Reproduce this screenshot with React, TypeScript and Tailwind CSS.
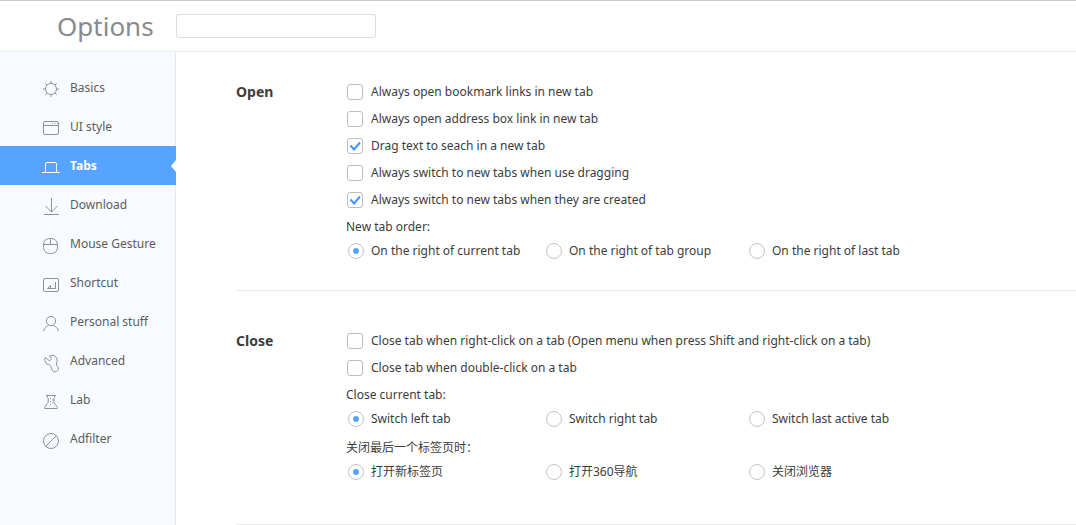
import { useState, type ReactNode } from "react";

const icons: Record<string, ReactNode> = {
  Basics: (
    <>
      <circle cx="9" cy="12" r="5.5" />
      <path d="M9 6.500V4M9 20v-2.500M3.500 12H1M17 12h-2.500M5.100 8.100L3.300 6.300M14.700 17.700l-1.800-1.800M5.100 15.900l-1.800 1.800M14.700 6.300l-1.800 1.800" />
    </>
  ),
  "UI style": (
    <>
      <rect x="1.500" y="5.500" width="15" height="13" rx="1.500" />
      <path d="M1.500 9.500h15M10 7.500h1M12.500 7.500h1M15 7.500h.8" />
    </>
  ),
  Tabs: <path d="M0 17.500h18M3.500 17.500V9q0-1.500 1.500-1.500h8q1.500 0 1.500 1.500v8.500" />,
  Download: <path d="M2 20.500h15M9.500 4v14M3.500 12l6 6 6-6" />,
  "Mouse Gesture": (
    <>
      <rect x="1.500" y="5.500" width="14" height="15" rx="6" />
      <path d="M1.500 11.500h14M8.500 5.500v6" />
    </>
  ),
  Shortcut: (
    <>
      <rect x="1.500" y="6.500" width="15" height="13" rx="1.500" />
      <path d="M13.500 10v6.500h-8l3-3v3" />
    </>
  ),
  "Personal stuff": (
    <>
      <circle cx="9" cy="10" r="4.600" />
      <path d="M1.500 20c.8-2.800 2.700-4.500 5-5.600M16.500 20c-.8-2.800-2.700-4.500-5-5.600" />
    </>
  ),
  Advanced: (
    <path d="M3.300 7.500c-1 2-.6 4 .7 5.600 1.200 1.400 3.300 1.300 4.300 2.400 1 1.200.9 3.300 1.900 4.700.9 1.500 2.600 2 4.200 1.300 1.800-.9 2.500-2.200 1.900-3.700-.5-1.400-1.900-2.300-2-3.800-.1-1.300.9-2.100.9-3.700 0-2.900-2.300-5.100-5.400-5-1 0-2 .1-2.300.5l1.900 2.700c-.2 1.200-.9 1.900-2.200 2.100z" />
  ),
  Lab: (
    <>
      <path d="M4 6.500h10M5.500 6.500v2l.7.700v4.100l-3.700 5.200q-.3 1 .5 1h12q.8 0 .5-1l-3.700-5.200V9.200l.7-.7v-2" />
      <path d="M8 9.500h1M8 12.500h1M10 11h1M8 15.500h1M10 14h1" />
    </>
  ),
  Adfilter: (
    <>
      <circle cx="9" cy="13" r="7.500" />
      <path d="M3.700 18.300L14.300 7.700" />
    </>
  ),
};

function Check({ label, checked = false }: { label: string; checked?: boolean }) {
  return (
    <label className="flex h-[27px] items-center gap-2 pl-px">
      <span className="grid size-4 shrink-0">
        <input
          type="checkbox"
          defaultChecked={checked}
          className="peer col-start-1 row-start-1 size-4 appearance-none rounded-[3px] border border-[#bdbdbd] bg-white"
        />
        <svg
          viewBox="0 0 16 16"
          className="pointer-events-none col-start-1 row-start-1 size-4 fill-none stroke-[#3d97ff] stroke-2 opacity-0 peer-checked:opacity-100"
        >
          <path d="M3.500 7.500l3.500 4 6-7" />
        </svg>
      </span>
      {label}
    </label>
  );
}

function RadioGroup({ title, name, options }: { title: string; name: string; options: string[] }) {
  return (
    <div role="radiogroup" aria-label={title}>
      <p className="h-[27px] leading-[27px]">{title}</p>
      <div className="grid grid-cols-[198px_203px_auto] justify-start pl-0.5">
        {options.map((option, i) => (
          <label key={option} className="flex h-[21px] items-center gap-[7px] whitespace-nowrap">
            <input
              type="radio"
              name={name}
              defaultChecked={i === 0}
              className="grid size-4 shrink-0 appearance-none place-content-center rounded-full border border-[#c4c4c4] bg-white before:size-1.5 before:rounded-full checked:before:bg-[#56a4ff]"
            />
            {option}
          </label>
        ))}
      </div>
    </div>
  );
}

function Section({ title, className, children }: { title: string; className: string; children: ReactNode }) {
  return (
    <section className={`flex border-b border-[#e9e9e9] ${className}`}>
      <h2 className="w-[110px] shrink-0 text-sm leading-[27px] font-bold">{title}</h2>
      <div className="min-w-0 flex-1">{children}</div>
    </section>
  );
}

export default function App() {
  const [active, setActive] = useState("Tabs");
  return (
    <div className="flex min-h-screen flex-col bg-white font-['Noto_Sans','Noto_Sans_CJK_SC',sans-serif] text-[12px] text-[#3c3c3c]">
      <header className="flex h-[52px] items-center border-y border-t-[#c8c8c8] border-b-[#e8ebf0]">
        <h1 className="w-44 pl-[57px] text-[26px] leading-8 text-[#8a8a8a]">Options</h1>
        <input
          type="search"
          aria-label="Search options"
          className="h-6 w-[200px] rounded-xs border border-[#dfdfdf] px-2 outline-none"
        />
      </header>
      <div className="flex flex-1">
        <nav className="w-44 shrink-0 border-r border-[#e6eaf0] bg-[#f8fbff] pt-4">
          {Object.keys(icons).map((name) => {
            const on = name === active;
            return (
              <a
                key={name}
                href="#"
                aria-current={on ? "page" : undefined}
                onClick={(e) => {
                  e.preventDefault();
                  setActive(name);
                }}
                className={`relative flex h-[39px] items-center gap-[9px] pl-[42px] whitespace-nowrap ${
                  on ? "-mr-px bg-[#56a4ff] font-bold text-white" : "text-[#5c5c5c]"
                }`}
              >
                <svg
                  viewBox="0 0 19 21"
                  className={`h-[21px] w-[19px] shrink-0 overflow-visible fill-none ${on ? "stroke-white" : "stroke-[#8f9194]"}`}
                >
                  {icons[name]}
                </svg>
                {name}
                {on && (
                  <svg viewBox="0 0 5 12" className="absolute top-3.5 right-0 h-3 w-[5px] fill-white">
                    <path d="M5 0v12L0 6z" />
                  </svg>
                )}
              </a>
            );
          })}
        </nav>
        <main className="min-w-0 flex-1 pl-[60px]">
          <Section title="Open" className="pt-[26px] pb-[29px]">
            <Check label="Always open bookmark links in new tab" />
            <Check label="Always open address box link in new tab" />
            <Check label="Drag text to seach in a new tab" checked />
            <Check label="Always switch to new tabs when use dragging" />
            <Check label="Always switch to new tabs when they are created" checked />
            <RadioGroup
              title="New tab order:"
              name="order"
              options={["On the right of current tab", "On the right of tab group", "On the right of last tab"]}
            />
          </Section>
          <Section title="Close" className="pt-9 pb-[42px]">
            <Check label="Close tab when right-click on a tab (Open menu when press Shift and right-click on a tab)" />
            <Check label="Close tab when double-click on a tab" />
            <div className="flex flex-col gap-[5px]">
              <RadioGroup
                title="Close current tab:"
                name="close"
                options={["Switch left tab", "Switch right tab", "Switch last active tab"]}
              />
              <RadioGroup
                title="关闭最后一个标签页时："
                name="last"
                options={["打开新标签页", "打开360导航", "关闭浏览器"]}
              />
            </div>
          </Section>
        </main>
      </div>
    </div>
  );
}
